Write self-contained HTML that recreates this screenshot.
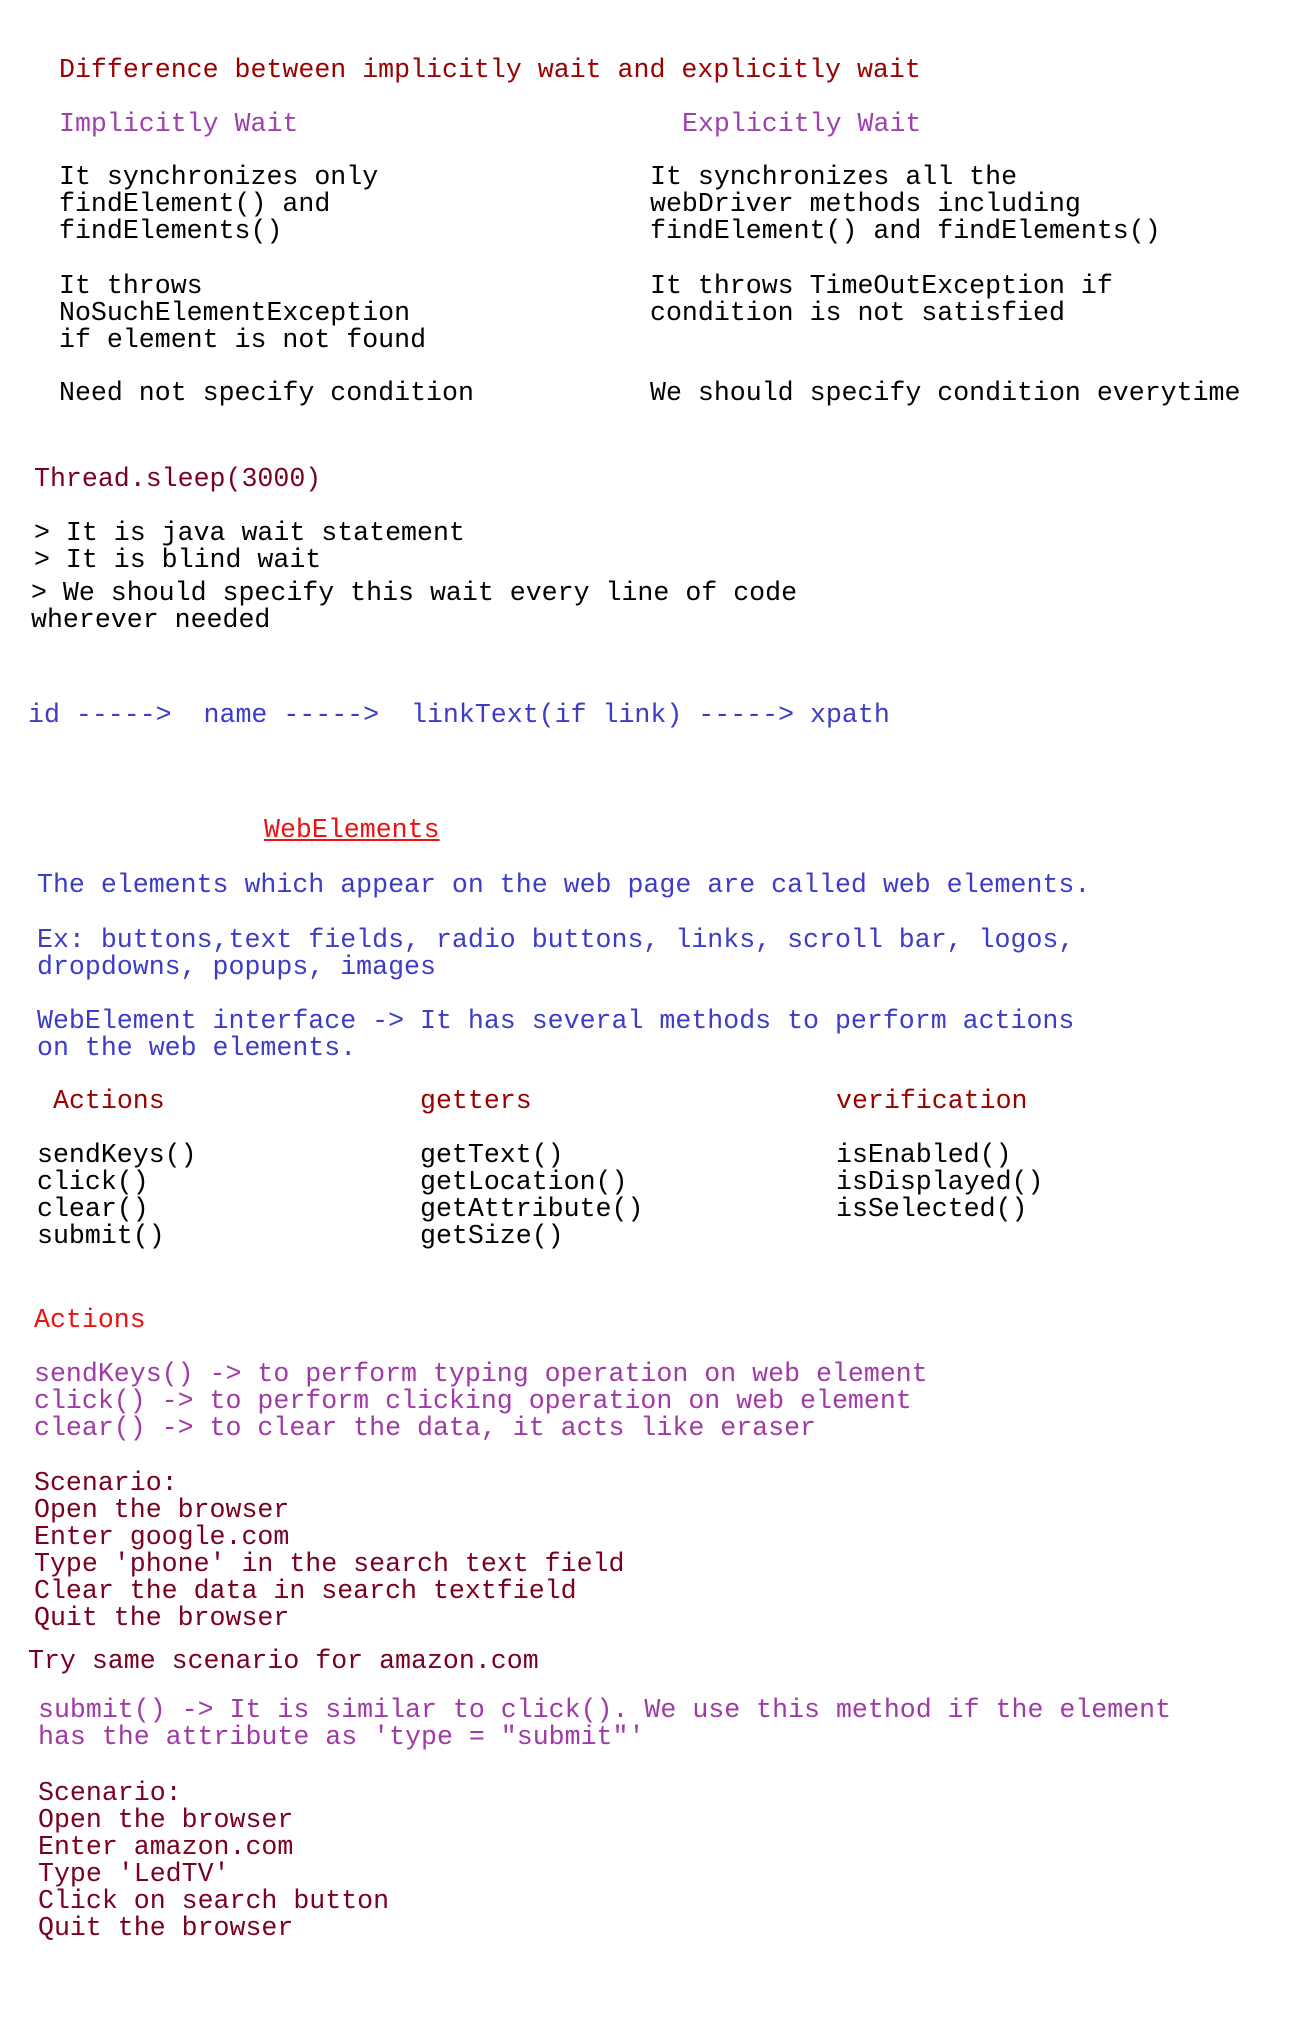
<!DOCTYPE html>
<html><head><meta charset="utf-8"><style>
html,body{margin:0;padding:0;background:#fff;width:1290px;height:2026px;overflow:hidden}
.b{position:absolute;white-space:pre;font-family:"Liberation Mono",monospace;font-size:26.6px;line-height:27.1px;color:#000;letter-spacing:0;margin-top:4px}
.dr{color:#990000}.pu{color:#a040b0}.bl{color:#3c3cc8}.rd{color:#ee1111}.mr{color:#7a0020}.pp{color:#a03aa6}
</style></head><body>
<div class="b dr" style="left:59px;top:53px">Difference between implicitly wait and explicitly wait</div>
<div class="b pu" style="left:59px;top:107px">Implicitly Wait</div>
<div class="b pu" style="left:682px;top:107px">Explicitly Wait</div>
<div class="b" style="left:59px;top:160px">It synchronizes only
findElement() and
findElements()</div>
<div class="b" style="left:650px;top:160px">It synchronizes all the
webDriver methods including
findElement() and findElements()</div>
<div class="b" style="left:59px;top:269px">It throws
NoSuchElementException
if element is not found</div>
<div class="b" style="left:650px;top:269px">It throws TimeOutException if
condition is not satisfied</div>
<div class="b" style="left:59px;top:376px">Need not specify condition</div>
<div class="b" style="left:650px;top:376px">We should specify condition everytime</div>
<div class="b mr" style="left:34px;top:462px">Thread.sleep(3000)</div>
<div class="b" style="left:34px;top:516px">&gt; It is java wait statement
&gt; It is blind wait</div>
<div class="b" style="left:31px;top:576px">&gt; We should specify this wait every line of code
wherever needed</div>
<div class="b bl" style="left:28px;top:698px">id -----&gt;  name -----&gt;  linkText(if link) -----&gt; xpath</div>
<div class="b rd" style="left:264px;top:813px;text-decoration:underline">WebElements</div>
<div class="b bl" style="left:37px;top:868px">The elements which appear on the web page are called web elements.</div>
<div class="b bl" style="left:37px;top:923px">Ex: buttons,text fields, radio buttons, links, scroll bar, logos,
dropdowns, popups, images</div>
<div class="b bl" style="left:37px;top:1004px">WebElement interface -&gt; It has several methods to perform actions
on the web elements.</div>
<div class="b dr" style="left:53px;top:1084px">Actions</div>
<div class="b dr" style="left:420px;top:1084px">getters</div>
<div class="b dr" style="left:836px;top:1084px">verification</div>
<div class="b" style="left:37px;top:1138px">sendKeys()
click()
clear()
submit()</div>
<div class="b" style="left:420px;top:1138px">getText()
getLocation()
getAttribute()
getSize()</div>
<div class="b" style="left:836px;top:1138px">isEnabled()
isDisplayed()
isSelected()</div>
<div class="b rd" style="left:34px;top:1303px">Actions</div>
<div class="b pp" style="left:34px;top:1357px">sendKeys() -&gt; to perform typing operation on web element
click() -&gt; to perform clicking operation on web element
clear() -&gt; to clear the data, it acts like eraser</div>
<div class="b mr" style="left:34px;top:1466px">Scenario:
Open the browser
Enter google.com
Type 'phone' in the search text field
Clear the data in search textfield
Quit the browser</div>
<div class="b mr" style="left:28px;top:1644px">Try same scenario for amazon.com</div>
<div class="b pp" style="left:38px;top:1693px">submit() -&gt; It is similar to click(). We use this method if the element
has the attribute as 'type = "submit"'</div>
<div class="b mr" style="left:38px;top:1776px">Scenario:
Open the browser
Enter amazon.com
Type 'LedTV'
Click on search button
Quit the browser</div>
</body></html>
